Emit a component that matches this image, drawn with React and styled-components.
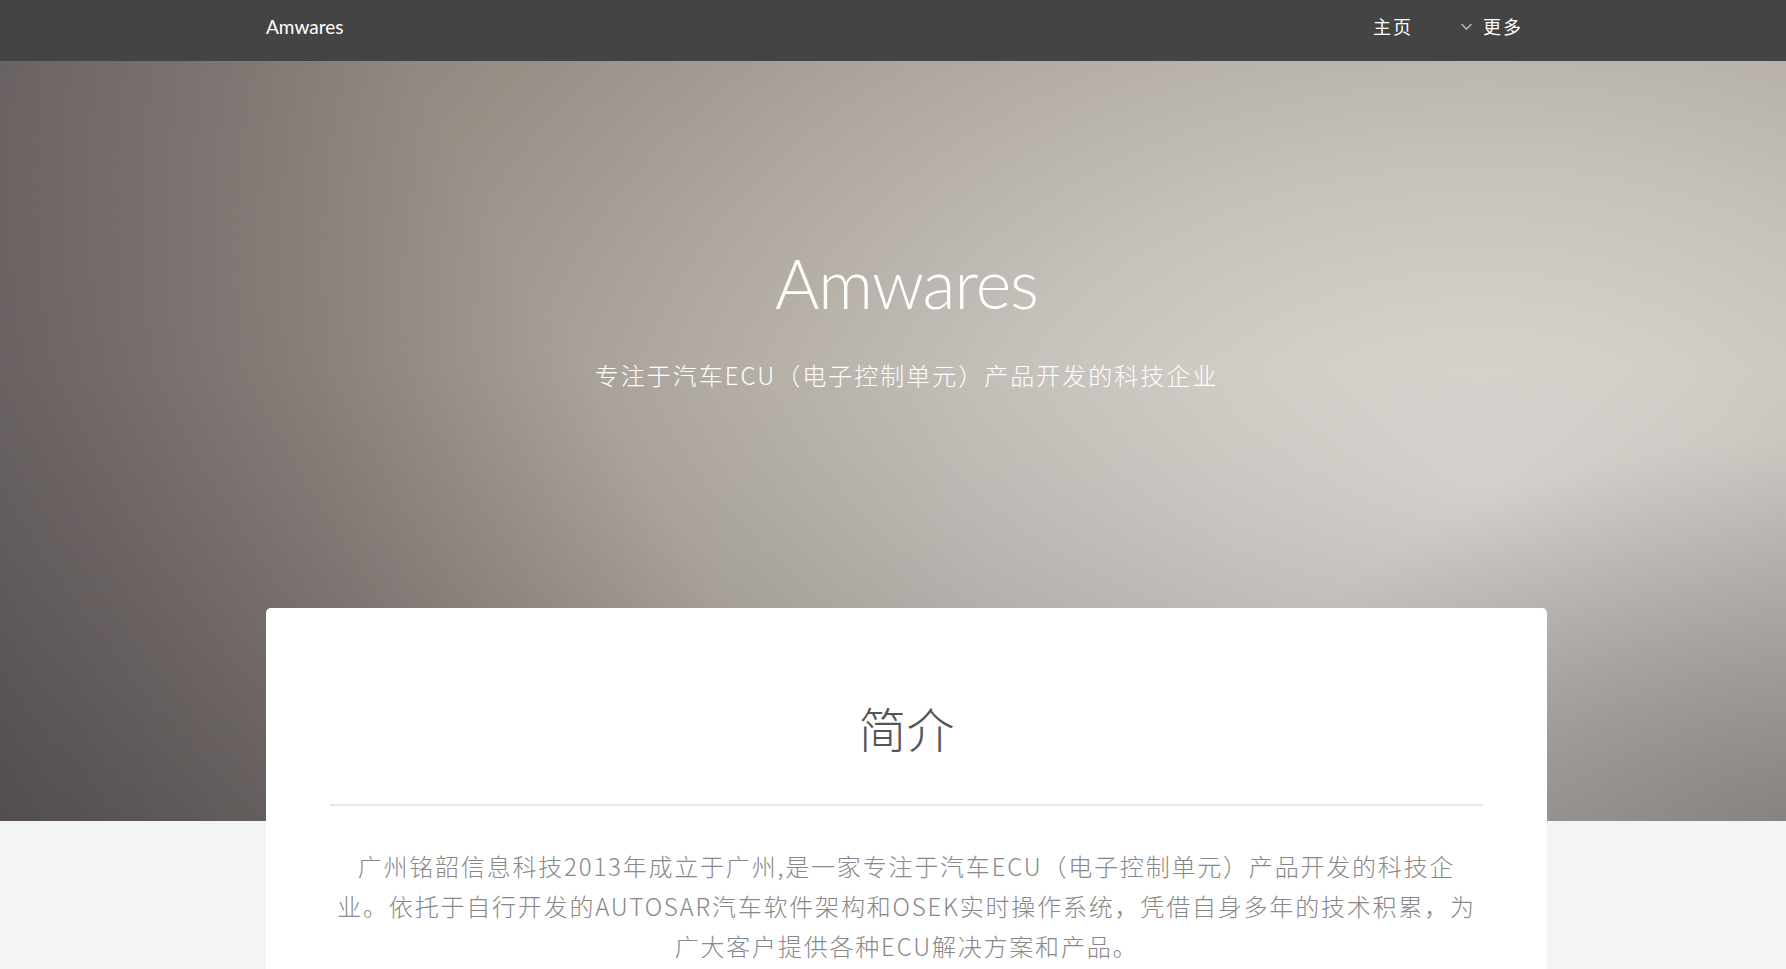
import React from "react";
import styled, { createGlobalStyle } from "styled-components";

const GlobalStyle = createGlobalStyle`
  body {
    margin: 0;
    background: #f4f4f4;
    font-family: Lato, "Noto Sans CJK SC", sans-serif;
  }
`;

const Container = styled.div`
  width: 1281px;
  margin-left: 266px;
  box-sizing: border-box;
`;

const NavBar = styled.header`
  height: 61px;
  background: #444;
`;
const NavInner = styled(Container)`
  height: 100%;
  display: flex;
  align-items: center;
  justify-content: space-between;
  padding-right: 24px;
`;
const Brand = styled.a`
  color: #fff;
  font-family: Lato, sans-serif;
  font-size: 19px;
  text-decoration: none;
  margin-top: -8px;
`;
const NavLinks = styled.nav`
  display: flex;
  align-items: center;
  gap: 47px;
  margin-top: -9px;
`;
const NavItem = styled.a`
  display: flex;
  align-items: center;
  gap: 10px;
  color: #fff;
  font-family: "Noto Sans CJK SC", sans-serif;
  font-size: 18px;
  letter-spacing: 2px;
  text-decoration: none;
  svg {
    margin-top: 1px;
  }
`;

const Hero = styled.section`
  height: 760px;
  background:
    radial-gradient(560px 380px at 100% 100%, rgba(105, 103, 103, 0.5), rgba(105, 103, 103, 0)),
    linear-gradient(60deg, rgba(45, 40, 50, 0.4) 0%, rgba(45, 40, 50, 0) 38%),
    linear-gradient(to bottom, rgba(40, 38, 42, 0) 40%, rgba(40, 38, 42, 0.18) 100%),
    radial-gradient(
      ellipse 1700px 1100px at 1480px 420px,
      #dcd9d4 0%,
      #d2cfc9 15%,
      #c4c0ba 30%,
      #aea79f 50%,
      #978e86 68%,
      #877e79 82%,
      #7b7370 93%,
      #6a6365 100%
    );
`;
const HeroContent = styled(Container)`
  display: flex;
  flex-direction: column;
  align-items: center;
  padding-top: 182px;
  color: #fff;
`;
const HeroTitle = styled.h1`
  margin: 0;
  font-family: Lato, sans-serif;
  font-weight: 300;
  font-size: 68px;
  letter-spacing: -1px;
  line-height: 80px;
`;
const HeroSubtitle = styled.p`
  margin: 32px 0 0;
  font-family: "Noto Sans CJK SC", sans-serif;
  font-weight: 300;
  font-size: 24px;
  letter-spacing: 2px;
  line-height: 40px;
`;

const Main = styled(Container)`
  margin-top: -213px;
`;
const Card = styled.article`
  background: #fff;
  border-radius: 5px;
  padding: 92px 64px 80px;
  text-align: center;
`;
const CardTitle = styled.h2`
  margin: 0;
  font-family: "Noto Sans CJK SC", serif;
  font-weight: 300;
  font-size: 48px;
  line-height: 55px;
  color: #555;
`;
const Divider = styled.hr`
  border: 0;
  height: 2px;
  background: #e6e6e6;
  margin: 49px 0 40px;
`;
const Paragraph = styled.p`
  margin: 0;
  font-family: "Noto Sans CJK SC", sans-serif;
  font-weight: 300;
  font-size: 24px;
  letter-spacing: 1.8px;
  line-height: 40px;
  color: #888;
`;

const Chevron = () => (
  <svg width="13" height="9" viewBox="0 0 13 9">
    <polyline points="1.5,2 6.5,7 11.5,2" fill="none" stroke="#b5b5b5" strokeWidth="1.6" />
  </svg>
);

export default function App() {
  return (
    <>
      <GlobalStyle />
      <NavBar>
        <NavInner>
          <Brand href="#">Amwares</Brand>
          <NavLinks>
            <NavItem href="#">主页</NavItem>
            <NavItem href="#">
              <Chevron />
              更多
            </NavItem>
          </NavLinks>
        </NavInner>
      </NavBar>
      <Hero>
        <HeroContent>
          <HeroTitle>Amwares</HeroTitle>
          <HeroSubtitle>专注于汽车ECU（电子控制单元）产品开发的科技企业</HeroSubtitle>
        </HeroContent>
      </Hero>
      <Main>
        <Card>
          <CardTitle>简介</CardTitle>
          <Divider />
          <Paragraph>
            广州铭韶信息科技2013年成立于广州,是一家专注于汽车ECU（电子控制单元）产品开发的科技企
            <br />
            业。依托于自行开发的AUTOSAR汽车软件架构和OSEK实时操作系统，凭借自身多年的技术积累，为
            <br />
            广大客户提供各种ECU解决方案和产品。
          </Paragraph>
        </Card>
      </Main>
    </>
  );
}
